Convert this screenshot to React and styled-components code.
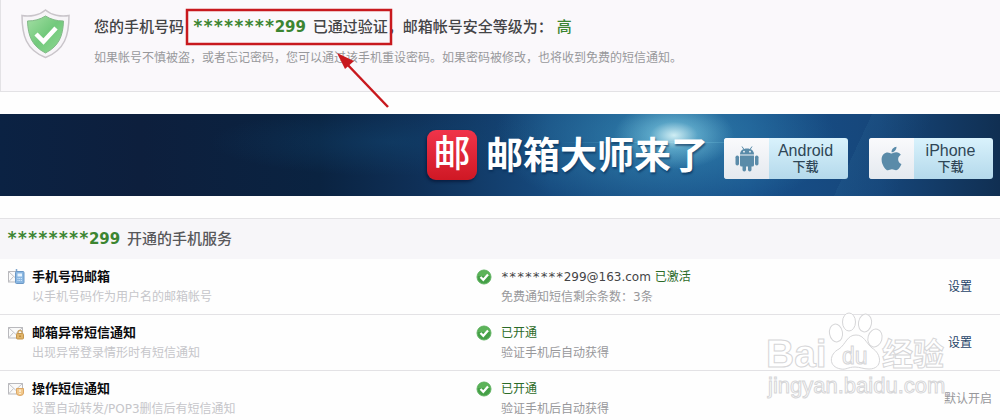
import React from "react";
import styled, { createGlobalStyle } from "styled-components";
import { FaApple } from "react-icons/fa";

const colors = {
  green: "#3c8531",
  darkGreen: "#2c6b28",
  text: "#444446",
  muted: "#98989b",
  faint: "#c6c6ca",
  panel: "#faf8fb",
  line: "#e3e2e5",
  link: "#1e4468",
  danger: "#c8191e",
};

const GlobalStyle = createGlobalStyle`
  html {
    scrollbar-width: none;
  }

  body {
    margin: 0;
    background: #fefefe;
    color: ${colors.text};
    font-family: "DejaVu Sans", "Noto Sans CJK SC", sans-serif;
    font-size: 12px;
    line-height: 20px;
  }
`;

const Page = styled.main`
  position: relative;
  display: flex;
  flex-direction: column;
  gap: 22px;
`;

const StatusPanel = styled.section`
  position: relative;
  display: flex;
  gap: 24px;
  padding: 9px 20px 23px;
  background: ${colors.panel};
  border-bottom: 1px solid ${colors.line};
  border-left: 1px solid ${colors.line};
`;

const StatusText = styled.div`
  padding-top: 7px;
`;

const Title = styled.h1`
  margin: 0 0 10px;
  color: ${colors.text};
  font-size: 15px;
  font-weight: 500;
  line-height: 22px;
`;

const Description = styled.p`
  margin: 0;
  color: ${colors.muted};
`;

const Phone = styled.strong`
  margin-right: 2px;
  color: ${colors.green};
  font-weight: 700;
`;

const TitlePhone = styled.span`
  margin-left: 4px;
`;

const Stars = styled.span`
  font-family: "DejaVu Sans Mono", monospace;
  font-size: ${({ $size }) => $size}px;
  line-height: 1;
`;

const Level = styled.span`
  margin-left: 4px;
  color: ${colors.green};
`;

const Annotation = styled.svg`
  position: absolute;
  top: 0;
  left: 179px;
  pointer-events: none;
`;

const Banner = styled.section`
  display: flex;
  align-items: center;
  justify-content: flex-end;
  height: 82px;
  padding-right: 7px;
  background:
    radial-gradient(ellipse 60px 34px at 67.4% 26%, rgba(225, 250, 252, 0.9), rgba(140, 215, 235, 0.45) 40%, transparent),
    radial-gradient(ellipse 170px 80px at 66.5% 28%, rgba(60, 150, 190, 0.7), transparent),
    linear-gradient(90deg, transparent 56%, rgba(150, 220, 240, 0.5) 67%, transparent 78%) 0 28px / 100% 1px no-repeat,
    linear-gradient(115deg, transparent 84%, rgba(60, 130, 170, 0.12) 84%, transparent 90%),
    radial-gradient(ellipse 180px 34px at 39% 34%, rgba(18, 75, 120, 0.4), transparent),
    linear-gradient(90deg, #0b2243 0%, #0d1f3d 14%, #0a2341 32%, #0f3058 42%, #164a7e 55%, #17508a 75%, #16467a 88%, #102f52 100%);
`;

const BannerLogo = styled.span`
  display: grid;
  place-items: center;
  width: 50px;
  height: 50px;
  margin-right: 9px;
  border-radius: 9px;
  background: linear-gradient(#f0344a, #cf1824);
  box-shadow: -1px 2px 3px rgba(0, 10, 40, 0.5);
  color: #fff;
  font-size: 37px;
  font-weight: 500;
`;

const BannerTitle = styled.h2`
  margin: 0 16px 0 0;
  padding-top: 4px;
  color: #fff;
  font-size: 37px;
  font-weight: 700;
  line-height: 50px;
  text-shadow: 1px 2px 2px rgba(5, 40, 80, 0.6);
  white-space: nowrap;
`;

const Downloads = styled.div`
  display: flex;
  gap: 21px;
  padding-top: 7px;
`;

const DownloadLink = styled.a`
  display: flex;
  width: 124px;
  height: 41px;
  overflow: hidden;
  border-radius: 3px;
  background: linear-gradient(#d9f2fc, #b4d9eb);
  color: #2f4656;
  text-decoration: none;
`;

const DownloadIcon = styled.span`
  display: grid;
  place-items: center;
  flex: 0 0 45px;
  background: linear-gradient(#fafafc, #e4e9ef);
  color: #5a8ba9;
`;

const DownloadLabel = styled.span`
  display: flex;
  flex: 1;
  flex-direction: column;
  align-items: center;
  justify-content: center;
  padding-right: 6px;
  font-family: "Liberation Sans", "Noto Sans CJK SC", sans-serif;
  font-size: 16px;
  line-height: 16px;
`;

const DownloadAction = styled.span`
  font-size: 13px;
  font-weight: 500;
  line-height: 15px;
`;

const ServicesHeading = styled.h2`
  margin: 0;
  padding: 8px 7px;
  background: #f7f6f9;
  border-top: 1px solid ${colors.line};
  color: #58585b;
  font-size: 15px;
  font-weight: 500;
  line-height: 24px;
`;

const ServiceList = styled.ul`
  margin: 0;
  padding: 0;
  list-style: none;
`;

const ServiceRow = styled.li`
  display: grid;
  grid-template-columns: 1fr 1fr 56px;
  align-items: center;
  padding: 8px 0 7px 8px;
  border-bottom: 1px solid ${colors.line};
`;

const Cell = styled.div`
  display: flex;
  gap: ${({ $gap }) => $gap}px;

  svg {
    flex: none;
    margin-top: 2px;
  }
`;

const ServiceName = styled.h3`
  margin: 0;
  color: #0c0c0e;
  font-size: 13px;
  font-weight: 700;
  line-height: 20px;
`;

const Hint = styled.p`
  margin: 0;
  color: ${({ $faint }) => ($faint ? colors.faint : colors.muted)};
`;

const State = styled.p`
  margin: 0;
`;

const Active = styled.span`
  color: ${colors.darkGreen};
`;

const SettingsLink = styled.a`
  padding-left: 4px;
  color: ${colors.link};
  text-decoration: none;
`;

const DefaultLabel = styled.span`
  color: ${colors.muted};
`;

const Watermark = styled.svg`
  position: absolute;
  top: 308px;
  right: 52px;
  pointer-events: none;
`;

const ShieldIcon = () => (
  <svg width="49" height="50" viewBox="0 0 49 50" aria-hidden="true">
    <defs>
      <linearGradient id="shield" x1="0" y1="0" x2="1" y2="1">
        <stop offset="0" stopColor="#a4dfa4" />
        <stop offset="0.5" stopColor="#72c97c" />
        <stop offset="1" stopColor="#8fd992" />
      </linearGradient>
    </defs>
    <path
      d="M24.5 1C19 6 9 8 1 6.500C1 26 5 41 24.500 48.500C44 41 48 26 48 6.500C40 8 30 6 24.500 1Z"
      fill="#f7f5f8"
      stroke="#c9c5ca"
      strokeWidth="1.500"
    />
    <path
      d="M24.500 7C19 10.500 13 12 6.500 12C7 27 11 37 24.500 44C38 37 42 27 42.500 12C36 12 30 10.500 24.500 7Z"
      fill="url(#shield)"
      stroke="#82b988"
    />
    <path
      d="M15 25L22.500 32.500L35 19"
      fill="none"
      stroke="#fff"
      strokeWidth="4.500"
    />
  </svg>
);

const AndroidIcon = () => (
  <svg width="24" height="26" viewBox="0 0 24 26" fill="currentColor" aria-hidden="true">
    <path d="M7 0.500L9 3.500M17 0.500L15 3.500" stroke="currentColor" />
    <path d="M5 8.500C5 4.500 8 2.500 12 2.500S19 4.500 19 8.500Z" />
    <circle cx="9" cy="5.700" r="0.900" fill="#f4f5f8" />
    <circle cx="15" cy="5.700" r="0.900" fill="#f4f5f8" />
    <path d="M5 9.500H19V19Q19 20.500 17.500 20.500H6.500Q5 20.500 5 19Z" />
    <rect x="0.500" y="9.500" width="3.500" height="10" rx="1.700" />
    <rect x="20" y="9.500" width="3.500" height="10" rx="1.700" />
    <rect x="7.500" y="18" width="3.500" height="7.500" rx="1.700" />
    <rect x="13" y="18" width="3.500" height="7.500" rx="1.700" />
  </svg>
);

const CheckIcon = () => (
  <svg width="16" height="16" viewBox="0 0 16 16" aria-hidden="true">
    <circle cx="8" cy="8" r="7" fill="#45a047" stroke="#64b565" />
    <path d="M2 7a6 5.500 0 0 1 12 0Z" fill="#6cbf66" opacity="0.6" />
    <path d="M4.500 8L7.300 10.800L12 5.500" fill="none" stroke="#fff" strokeWidth="2.200" />
  </svg>
);

const Badge = ({ kind }) => {
  if (kind === "phone") {
    return (
      <>
        <path d="M8.500 0V3" stroke="#7fa6cd" strokeWidth="1.500" />
        <rect x="7.500" y="2.500" width="8.500" height="12" rx="1" fill="#8ab7e2" stroke="#6b98c6" />
        <rect x="9.500" y="4.500" width="4.500" height="3" fill="#e6f4ff" />
        <path d="M9.500 9.500H14M9.500 11.500H14" stroke="#d6e9fa" strokeDasharray="1 0.700" />
      </>
    );
  }
  if (kind === "lock") {
    return (
      <>
        <path d="M10 9V7.500a2 2 0 0 1 4 0V9" fill="none" stroke="#caa263" strokeWidth="1.300" />
        <rect x="8.500" y="8.500" width="7" height="5.500" rx="1" fill="#e0b368" stroke="#c4954a" />
        <path d="M12 10.500V12" stroke="#8f6727" />
      </>
    );
  }
  return (
    <>
      <path d="M8.500 7.500H15.500V12Q15.500 14.500 12 14.500T8.500 12Z" fill="#f2c98c" stroke="#dca766" />
      <path d="M12 8.500V11M12 12V13" stroke="#fffaf0" strokeWidth="1.300" />
    </>
  );
};

const MailIcon = ({ kind }) => (
  <svg width="17" height="16" viewBox="0 0 17 16" aria-hidden="true">
    <rect x="0.500" y="2.500" width="14" height="10.500" fill="#fafafa" stroke="#b9b9bd" />
    <path d="M0.500 2.500L7.500 9L14.500 2.500M0.500 13L5.500 7.500M14.500 13L9.500 7.500" fill="none" stroke="#c2c2c6" />
    <Badge kind={kind} />
  </svg>
);

const services = [
  {
    name: "手机号码邮箱",
    hint: "以手机号码作为用户名的邮箱帐号",
    icon: "phone",
    account: "299@163.com",
    state: "已激活",
    note: "免费通知短信剩余条数：3条",
    editable: true,
  },
  {
    name: "邮箱异常短信通知",
    hint: "出现异常登录情形时有短信通知",
    icon: "lock",
    state: "已开通",
    note: "验证手机后自动获得",
    editable: true,
  },
  {
    name: "操作短信通知",
    hint: "设置自动转发/POP3删信后有短信通知",
    icon: "alert",
    state: "已开通",
    note: "验证手机后自动获得",
    editable: false,
  },
];

const MaskedPhone = () => (
  <Phone>
    <Stars $size={17}>********</Stars>299
  </Phone>
);

const Service = ({ service }) => (
  <ServiceRow>
    <Cell $gap={7}>
      <MailIcon kind={service.icon} />
      <div>
        <ServiceName>{service.name}</ServiceName>
        <Hint $faint>{service.hint}</Hint>
      </div>
    </Cell>
    <Cell $gap={9}>
      <CheckIcon />
      <div>
        <State>
          {service.account && (
            <>
              <Stars $size={13}>********</Stars>
              {service.account}{" "}
            </>
          )}
          <Active>{service.state}</Active>
        </State>
        <Hint>{service.note}</Hint>
      </div>
    </Cell>
    {service.editable ? (
      <SettingsLink href="#settings">设置</SettingsLink>
    ) : (
      <DefaultLabel>默认开启</DefaultLabel>
    )}
  </ServiceRow>
);

const BaiduWatermark = () => (
  <Watermark width="182" height="92" viewBox="0 0 182 92" aria-hidden="true">
    <g fill="#fff" stroke="#d6d6d8">
      <text x="0" y="59" fontFamily="Liberation Sans" fontWeight="700" fontSize="39">
        Bai
      </text>
      <ellipse cx="70" cy="25" rx="6.500" ry="9" transform="rotate(-10 70 25)" />
      <ellipse cx="83" cy="14" rx="6.500" ry="9" />
      <ellipse cx="99" cy="15" rx="6.500" ry="9" transform="rotate(10 99 15)" />
      <ellipse cx="109" cy="30" rx="7" ry="9" transform="rotate(15 109 30)" />
      <path d="M90 27C98 27 100 35 106 40C116 46 117 61 103 61C97 61 94 59 89 59C82 59 80 62 75 61C62 59 63 46 73 41C80 36 81 27 90 27Z" />
      <text x="76" y="56" fontFamily="Liberation Sans" fontSize="23">
        du
      </text>
      <text x="116" y="57" fontFamily="Noto Sans CJK SC" fontWeight="700" fontSize="31">
        经验
      </text>
      <text x="2" y="85" fontFamily="Liberation Sans" fontSize="22">
        jingyan.baidu.com
      </text>
    </g>
  </Watermark>
);

function App() {
  return (
    <Page>
      <GlobalStyle />
      <StatusPanel>
        <ShieldIcon />
        <StatusText>
          <Title>
            您的手机号码
            <TitlePhone>
              {" "}
              <MaskedPhone />
            </TitlePhone>{" "}
            已通过验证，邮箱帐号安全等级为：
            <Level>高</Level>
          </Title>
          <Description>
            如果帐号不慎被盗，或者忘记密码，您可以通过该手机重设密码。如果密码被修改，也将收到免费的短信通知。
          </Description>
        </StatusText>
        <Annotation width="220" height="112" viewBox="0 0 220 112" aria-hidden="true">
          <rect x="7" y="10" width="204" height="34" fill="none" stroke={colors.danger} strokeWidth="2.500" />
          <path d="M208 107L165 62" stroke={colors.danger} strokeWidth="2.500" />
          <path d="M157 53L174 61L165 69Z" fill={colors.danger} />
        </Annotation>
      </StatusPanel>

      <Banner>
        <BannerLogo>邮</BannerLogo>
        <BannerTitle>邮箱大师来了</BannerTitle>
        <Downloads>
          <DownloadLink href="#android">
            <DownloadIcon>
              <AndroidIcon />
            </DownloadIcon>
            <DownloadLabel>
              Android
              <DownloadAction>下载</DownloadAction>
            </DownloadLabel>
          </DownloadLink>
          <DownloadLink href="#iphone">
            <DownloadIcon>
              <FaApple size={27} />
            </DownloadIcon>
            <DownloadLabel>
              iPhone
              <DownloadAction>下载</DownloadAction>
            </DownloadLabel>
          </DownloadLink>
        </Downloads>
      </Banner>

      <section>
        <ServicesHeading>
          <MaskedPhone /> 开通的手机服务
        </ServicesHeading>
        <ServiceList>
          {services.map((service) => (
            <Service key={service.name} service={service} />
          ))}
        </ServiceList>
      </section>
      <BaiduWatermark />
    </Page>
  );
}

export default App;
